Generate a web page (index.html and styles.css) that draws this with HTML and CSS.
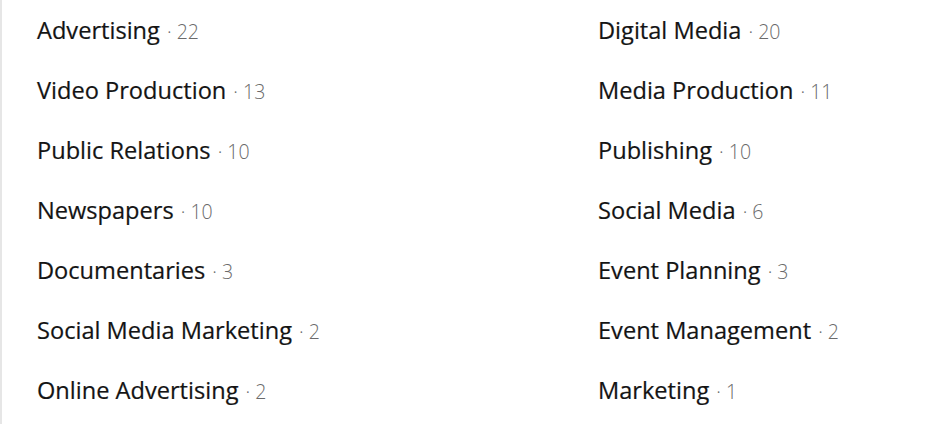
FILE: index.html
```html
<!DOCTYPE html>
<html>
<head>
<meta charset="utf-8">
<link rel="stylesheet" href="styles.css">
</head>
<body>
<div class="panel">
  <ul class="tags">
    <li><span class="name">Advertising</span><span class="count"> · 22</span></li>
    <li><span class="name">Digital Media</span><span class="count"> · 20</span></li>
    <li><span class="name">Video Production</span><span class="count"> · 13</span></li>
    <li><span class="name">Media Production</span><span class="count"> · 11</span></li>
    <li><span class="name">Public Relations</span><span class="count"> · 10</span></li>
    <li><span class="name">Publishing</span><span class="count"> · 10</span></li>
    <li><span class="name">Newspapers</span><span class="count"> · 10</span></li>
    <li><span class="name">Social Media</span><span class="count"> · 6</span></li>
    <li><span class="name">Documentaries</span><span class="count"> · 3</span></li>
    <li><span class="name">Event Planning</span><span class="count"> · 3</span></li>
    <li><span class="name">Social Media Marketing</span><span class="count"> · 2</span></li>
    <li><span class="name">Event Management</span><span class="count"> · 2</span></li>
    <li><span class="name">Online Advertising</span><span class="count"> · 2</span></li>
    <li><span class="name">Marketing</span><span class="count"> · 1</span></li>
  </ul>
</div>
</body>
</html>
```
FILE: styles.css
```css
html, body {
  margin: 0;
  padding: 0;
  background: #ffffff;
}
.panel {
  height: 424px;
  border-left: 2px solid #e6e6e6;
  box-sizing: border-box;
  font-family: "Open Sans", "Noto Sans", sans-serif;
}
.tags {
  list-style: none;
  margin: 0;
  padding: 0 0 0 35px;
  display: grid;
  grid-template-columns: 561px 1fr;
}
.tags li {
  line-height: 60px;
  height: 60px;
  white-space: nowrap;
}
.name {
  font-size: 23.6px;
  color: #141414;
  -webkit-text-stroke: 0.2px #141414;
}
.count {
  font-size: 19.5px;
  font-weight: 300;
  color: #6a6a6a;
  margin-left: 2px;
}
```
